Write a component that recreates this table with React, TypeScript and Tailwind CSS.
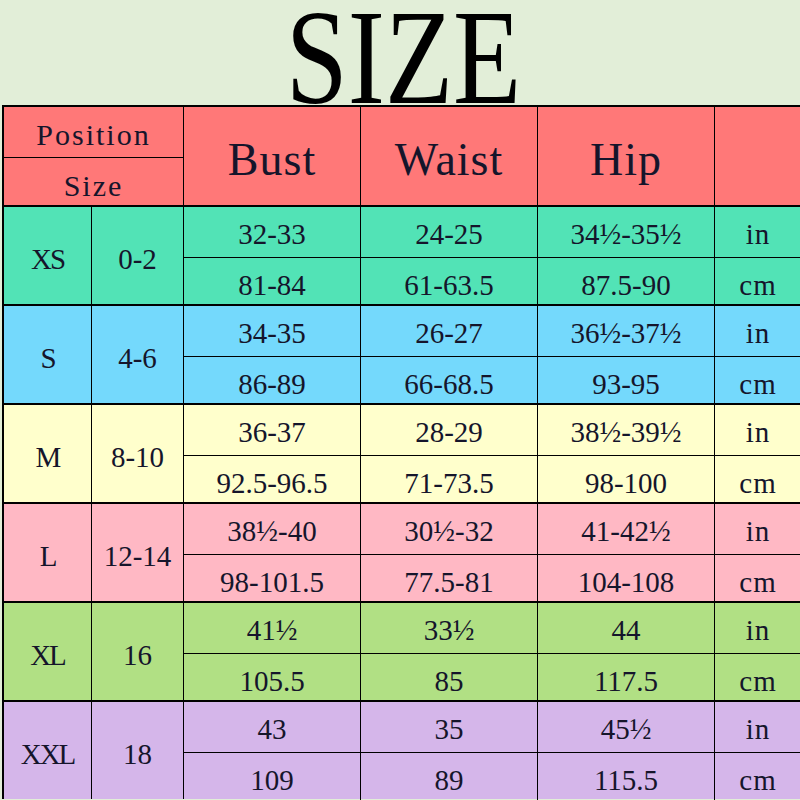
const groups = [
  { size: "XS", num: "0-2", bg: "bg-[#52e3b6]", rows: [["32-33", "24-25", "34½-35½", "in"], ["81-84", "61-63.5", "87.5-90", "cm"]] },
  { size: "S", num: "4-6", bg: "bg-[#74d9fc]", rows: [["34-35", "26-27", "36½-37½", "in"], ["86-89", "66-68.5", "93-95", "cm"]] },
  { size: "M", num: "8-10", bg: "bg-[#ffffcc]", rows: [["36-37", "28-29", "38½-39½", "in"], ["92.5-96.5", "71-73.5", "98-100", "cm"]] },
  { size: "L", num: "12-14", bg: "bg-[#ffb8c4]", rows: [["38½-40", "30½-32", "41-42½", "in"], ["98-101.5", "77.5-81", "104-108", "cm"]] },
  { size: "XL", num: "16", bg: "bg-[#b1e084]", rows: [["41½", "33½", "44", "in"], ["105.5", "85", "117.5", "cm"]] },
  { size: "XXL", num: "18", bg: "bg-[#d5b6ea]", rows: [["43", "35", "45½", "in"], ["109", "89", "115.5", "cm"]] },
];

function Group({ g }: { g: (typeof groups)[number] }) {
  return (
    <div className={`flex h-[99px] border-t-2 border-black ${g.bg}`}>
      <div className="w-[88px] shrink-0 border-r border-black flex items-center justify-center pt-[9px] tracking-[-2px]">{g.size}</div>
      <div className="w-[92px] shrink-0 border-r border-black flex items-center justify-center pt-[9px]">{g.num}</div>
      <div className="flex-1 flex flex-col">
        {g.rows.map((r, i) => (
          <div key={i} className={`flex flex-1 ${i === 0 ? "border-b border-black" : ""}`}>
            <div className="w-[177px] shrink-0 border-r border-black flex items-center justify-center pt-[6px]">{r[0]}</div>
            <div className="w-[177px] shrink-0 border-r border-black flex items-center justify-center pt-[6px]">{r[1]}</div>
            <div className="w-[177px] shrink-0 border-r border-black flex items-center justify-center pt-[6px]">{r[2]}</div>
            <div className="w-[86px] shrink-0 flex items-center justify-center pt-[6px] tracking-[1px]">{r[3]}</div>
          </div>
        ))}
      </div>
    </div>
  );
}

export default function App() {
  return (
    <div className="w-[800px] h-[800px] overflow-hidden bg-[#e2eed8]" style={{ fontFamily: '"Liberation Serif", serif' }}>
      {/* title */}
      <div className="h-[105px] pt-[9px] flex justify-center">
        <div className="text-[136px] leading-[96px] text-black scale-x-[0.82] ml-[8px]">SIZE</div>
      </div>

      <div className="ml-[2px] w-[830px] border-l-2 border-black text-[#15152b] text-[29px]">
        {/* header */}
        <div className="flex h-[100px] border-t-2 border-black bg-[#ff7878]">
          <div className="w-[180px] shrink-0 border-r border-black flex flex-col text-[30px] tracking-[2px]">
            <div className="flex-1 border-b border-black flex items-center justify-center pt-[5px]">Position</div>
            <div className="flex-1 flex items-center justify-center pt-[5px]">Size</div>
          </div>
          <div className="w-[177px] shrink-0 border-r border-black flex items-center justify-center text-[46px] tracking-[1px] pt-[6px]">Bust</div>
          <div className="w-[177px] shrink-0 border-r border-black flex items-center justify-center text-[46px] tracking-[1px] pt-[6px]">Waist</div>
          <div className="w-[177px] shrink-0 border-r border-black flex items-center justify-center text-[46px] tracking-[1px] pt-[6px]">Hip</div>
          <div className="flex-1" />
        </div>
        {groups.map((g) => (
          <Group key={g.size} g={g} />
        ))}
      </div>
    </div>
  );
}
